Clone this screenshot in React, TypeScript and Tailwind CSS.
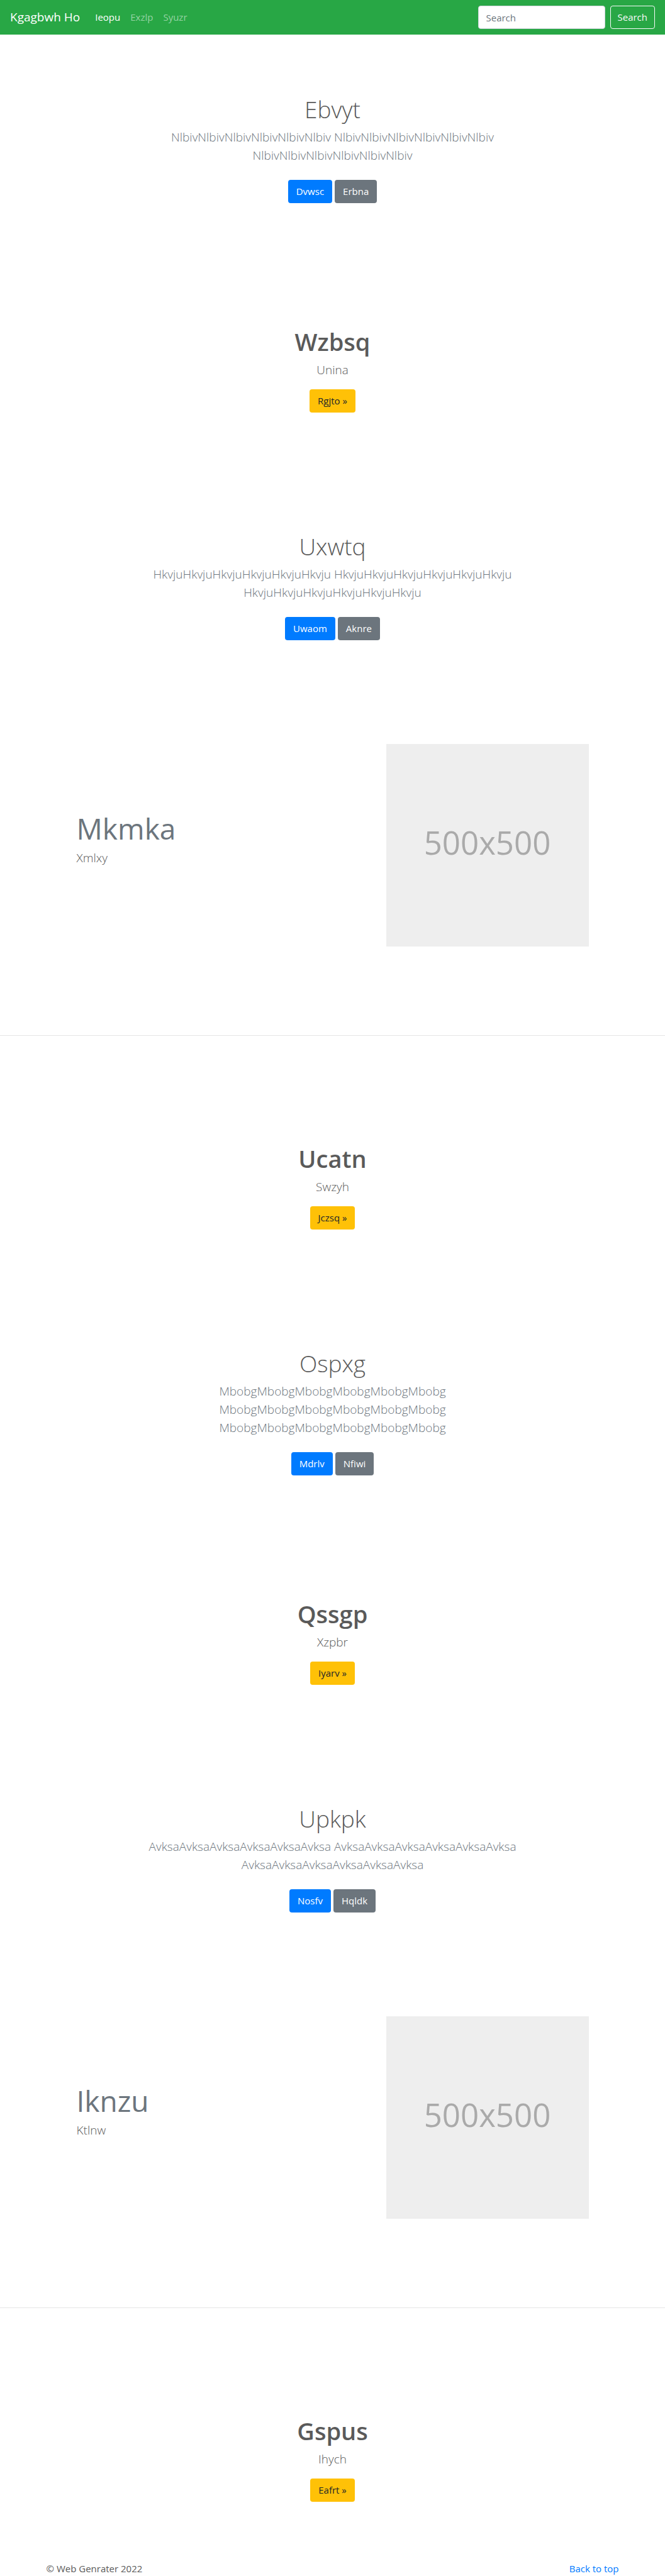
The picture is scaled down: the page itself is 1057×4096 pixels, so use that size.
import React from "react";

type HeroProps = { title: string; lead: string; primary: string; secondary: string };
type CtaProps = { title: string; lead: string; action: string };
type FeatureProps = { title: string; lead: string };

const repeat = (word: string, lines = 3) =>
  Array.from({ length: lines }, () => word.repeat(6)).join(" ");

function Hero({ title, lead, primary, secondary }: HeroProps) {
  return (
    <section className="px-4 pt-[94px] pb-[102px] text-center">
      <h1 className="mb-1.5 text-[37px] leading-[49px] font-light">{title}</h1>
      <p className="mx-auto mb-6 max-w-[640px] text-[19px] leading-[29px] font-light text-[#6c757d]">
        {lead}
      </p>
      <div className="flex justify-center gap-1">
        <a href="#" className="h-[37px] rounded bg-[#007bff] px-[13px] text-[15px] leading-[37px] text-white">
          {primary}
        </a>
        <a href="#" className="h-[37px] rounded bg-[#6c757d] px-[13px] text-[15px] leading-[37px] text-white">
          {secondary}
        </a>
      </div>
    </section>
  );
}

function CallToAction({ title, lead, action }: CtaProps) {
  return (
    <section className="px-4 py-[94px] text-center">
      <h1 className="mb-1.5 text-[38px] leading-[49px] font-semibold">{title}</h1>
      <p className="mb-4 text-[19px] leading-[29px] font-light">{lead}</p>
      <div className="flex justify-center">
        <a href="#" className="h-[37px] rounded bg-[#ffc107] px-[13px] text-[15px] leading-[37px] text-[#212529]">
          {action} »
        </a>
      </div>
    </section>
  );
}

function Featurette({ title, lead }: FeatureProps) {
  return (
    <section className="mb-[77px] border-b border-[#e5e5e5] pt-[63px] pb-[141px]">
      <div className="mx-auto flex max-w-[814px] items-center justify-between">
        <div>
          <h2 className="mb-2 text-[46px] leading-[49px] text-[#6c757d]">{title}</h2>
          <p className="mb-4 text-[19px] leading-[29px] font-light">{lead}</p>
        </div>
        <div
          role="img"
          aria-label="500x500"
          className="flex size-[322px] items-center justify-center bg-[#eeeeee] pb-2.5 text-[51px] text-[#aaaaaa]"
        >
          500x500
        </div>
      </div>
    </section>
  );
}

export default function App() {
  return (
    <div id="top" className="bg-white font-['Open_Sans','Noto_Sans',sans-serif] text-[15px] text-[#5a5a5a]">
      <nav className="flex h-[55px] items-center bg-[#28a745] px-4">
        <a href="#" className="mr-6 text-[19px] text-white">Kgagbwh Ho</a>
        <ul className="flex flex-1 gap-4">
          <li><a href="#" className="text-white">Ieopu</a></li>
          <li><a href="#" className="text-white/50">Exzlp</a></li>
          <li><a href="#" className="text-white/50">Syuzr</a></li>
        </ul>
        <form className="flex gap-2" onSubmit={(e) => e.preventDefault()}>
          <input
            type="search"
            aria-label="Search"
            placeholder="Search"
            className="h-[37px] w-[202px] rounded border border-[#ced4da] bg-white px-3 text-[#495057] placeholder:text-[#6c757d]"
          />
          <button type="submit" className="h-[37px] rounded border border-[#f8f9fa] px-[11px] text-[#f8f9fa]">
            Search
          </button>
        </form>
      </nav>

      <main>
        <Hero title="Ebvyt" lead={repeat("Nlbiv")} primary="Dvwsc" secondary="Erbna" />
        <CallToAction title="Wzbsq" lead="Unina" action="Rgjto" />
        <Hero title="Uxwtq" lead={repeat("Hkvju")} primary="Uwaom" secondary="Aknre" />
        <Featurette title="Mkmka" lead="Xmlxy" />
        <CallToAction title="Ucatn" lead="Swzyh" action="Jczsq" />
        <Hero title="Ospxg" lead={repeat("Mbobg")} primary="Mdrlv" secondary="Nfiwi" />
        <CallToAction title="Qssgp" lead="Xzpbr" action="Iyarv" />
        <Hero title="Upkpk" lead={repeat("Avksa")} primary="Nosfv" secondary="Hqldk" />
        <Featurette title="Iknzu" lead="Ktlnw" />
        <CallToAction title="Gspus" lead="Ihych" action="Eafrt" />
      </main>

      <footer className="mx-auto flex max-w-[940px] justify-between px-[15px] leading-6">
        <p>© Web Genrater 2022</p>
        <a href="#top" className="text-[#007bff]">Back to top</a>
      </footer>
    </div>
  );
}
